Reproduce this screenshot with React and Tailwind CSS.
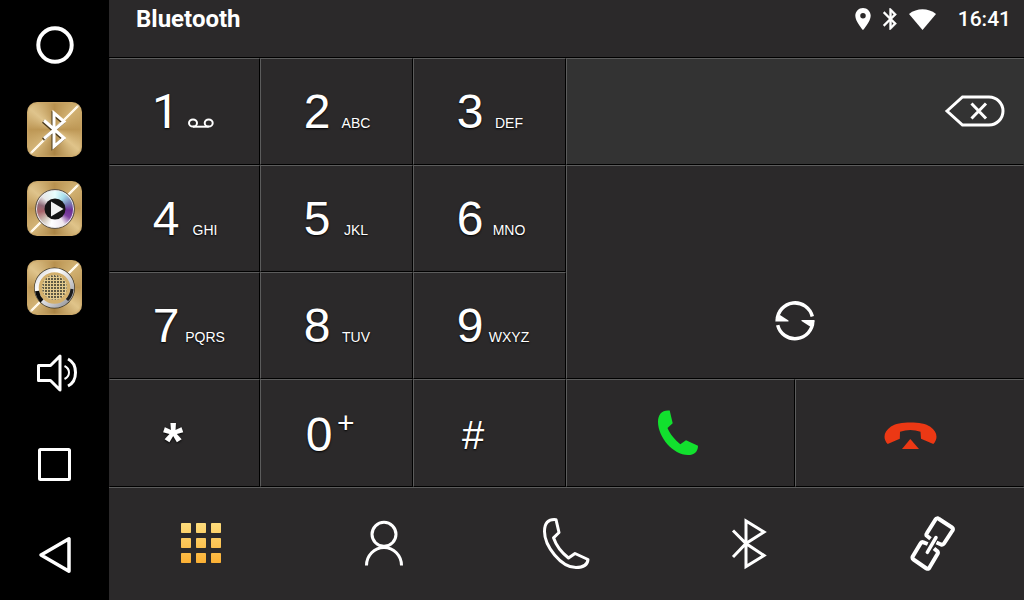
import React from 'react';

const KEYS = [
  { digit: '1', voicemail: true },
  { digit: '2', letters: 'ABC' },
  { digit: '3', letters: 'DEF' },
  { digit: '4', letters: 'GHI' },
  { digit: '5', letters: 'JKL' },
  { digit: '6', letters: 'MNO' },
  { digit: '7', letters: 'PQRS' },
  { digit: '8', letters: 'TUV' },
  { digit: '9', letters: 'WXYZ' },
];

// Bevelled separators: light on the top/left edge, dark on the bottom/right edge
const CELL = 'border border-t-[#5c5c5c] border-l-[#5c5c5c] border-b-black border-r-black';
const FIRST_CELL = 'border border-t-[#5c5c5c] border-l-transparent border-b-black border-r-black';
const TILE = 'flex h-[55px] w-[55px] items-center justify-center rounded-[10px] bg-[linear-gradient(135deg,transparent_48%,#fff8e8_49%,#fff8e8_51%,transparent_52%),conic-gradient(#b8914f,#d2b273_45deg,#bd9755_90deg,#e0c48a_130deg,#aa8445_180deg,#d4b578_225deg,#bd9755_270deg,#dfc48c_310deg,#b8914f)] shadow-[inset_0_0_2px_1px_#c9a566]';

const VoicemailIcon = () => (
  <svg width="26" height="10" viewBox="0 0 26 10" fill="none" stroke="white" strokeWidth="2" className="mr-2">
    <ellipse cx="5" cy="5" rx="4" ry="3.6" />
    <ellipse cx="20.7" cy="5" rx="4" ry="3.6" />
    <path d="M5 8.7H20.7" />
  </svg>
);

const Key = ({ digit, letters, voicemail, first }) => (
  <button className={`${first ? FIRST_CELL : CELL} flex items-center pl-[42px]`}>
    <span className="flex items-baseline [text-shadow:0_1px_2px_#000]">
      {/* Roboto's 1 has no foot */}
      <span className={`w-7 text-center text-5xl leading-none ${voicemail ? "pr-1 font-['Roboto',sans-serif]" : ''}`}>{digit}</span>
      <span className="flex w-[50px] justify-center text-sm">
        {voicemail ? <VoicemailIcon /> : letters}
      </span>
    </span>
  </button>
);

const Sidebar = () => (
  <aside className="grid w-[109px] shrink-0 grid-rows-[90fr_79fr_79fr_79fr_92fr_91fr_90fr] bg-black">
    <button aria-label="Home" className="flex items-center justify-center">
      <svg width="38" height="38" viewBox="0 0 38 38" fill="none" stroke="white" strokeWidth="4">
        <circle cx="19" cy="19" r="16.7" />
      </svg>
    </button>
    <button aria-label="Bluetooth" className="flex items-center justify-center">
      <span className={TILE}>
        <svg width="55" height="55" viewBox="0 0 55 55" fill="none">
          <path d="M17 18.500L37 36L27 44.500V11L37 19.500L17 36.500" stroke="#4b3a1c" strokeWidth="3" transform="translate(-1 1)" />
          <path d="M17 18.500L37 36L27 44.500V11L37 19.500L17 36.500" stroke="white" strokeWidth="3" />
        </svg>
      </span>
    </button>
    <button aria-label="Music" className="flex items-center justify-center">
      <span className={TILE}>
        <span className="flex h-10 w-10 items-center justify-center rounded-full border border-[#5d5346] bg-[conic-gradient(#e8ffff,#a8e0ee_35deg,#7a86b8_65deg,#6d2f94_95deg,#7d3fa0_120deg,#f0e8f0_150deg,#ffffff_195deg,#cfc4b8_225deg,#a8636a_260deg,#8f6a78_285deg,#e8e8e8_315deg,#e8ffff)] shadow-[inset_0_0_0_1px_#e9e9ee]">
          <svg width="22" height="22" viewBox="0 0 22 22">
            <circle cx="11" cy="11" r="10.500" fill="#141414" />
            <path d="M7 3.500L19.500 11L7 18.500Z" fill="#f2f2f2" />
          </svg>
        </span>
      </span>
    </button>
    <button aria-label="Radio" className="flex items-center justify-center">
      <span className={TILE}>
        <svg width="55" height="55" viewBox="0 0 55 55">
          <defs>
            <pattern id="mesh" width="3" height="3" patternUnits="userSpaceOnUse">
              <rect width="3" height="3" fill="#e3ca8e" />
              <rect width="2" height="2" fill="#5f5a44" />
            </pattern>
            <linearGradient id="chrome" x1="0" y1="0" x2="1" y2="1">
              <stop offset="0" stopColor="#d4d4d8" />
              <stop offset=".3" stopColor="#ffffff" />
              <stop offset=".7" stopColor="#c4c4c8" />
              <stop offset="1" stopColor="#8a8a8e" />
            </linearGradient>
          </defs>
          <circle cx="27.500" cy="28" r="20.500" fill="#3c3627" />
          <circle cx="27.500" cy="28" r="17.800" fill="#d3b06d" stroke="url(#chrome)" strokeWidth="4" />
          <path d="M10 31A18 18 0 0 0 15 41" fill="none" stroke="#0c0c0c" strokeWidth="4" />
          <path d="M45 29A18 18 0 0 1 40 40" fill="none" stroke="#1c1c1c" strokeWidth="3" />
          <circle cx="27.500" cy="27.500" r="12.500" fill="url(#mesh)" />
          <circle cx="27.500" cy="27.500" r="12" fill="none" stroke="#f0e2bc" strokeDasharray="1 2" />
        </svg>
      </span>
    </button>
    <button aria-label="Volume" className="flex items-center justify-center">
      <svg width="42" height="40" viewBox="0 0 42 40" fill="none" stroke="white" strokeWidth="3" strokeLinejoin="round" className="ml-1">
        <path d="M2.500 12.500H14.500L24 3V37L14.500 27.500H2.500Z" />
        <path d="M28.500 13C34.500 16 34.500 23 28.500 26" strokeWidth="2" />
        <path d="M32 6C42 11 42 28 32 33" />
      </svg>
    </button>
    <button aria-label="Recent apps" className="flex items-center justify-center">
      <svg width="33" height="33" viewBox="0 0 33 33" fill="none" stroke="white" strokeWidth="3">
        <rect x="1.500" y="1.500" width="30" height="30" rx="1" />
      </svg>
    </button>
    <button aria-label="Back" className="flex items-center justify-center">
      <svg width="34" height="38" viewBox="0 0 34 38" fill="none" stroke="white" strokeWidth="3.500" strokeLinejoin="round">
        <path d="M3 19L31 2.800V35.200Z" />
      </svg>
    </button>
  </aside>
);

const Header = () => (
  <header className="h-[58px] border-b border-black pr-[13px] pl-[27px] font-['Roboto',sans-serif]">
    <div className="flex h-[38px] items-center justify-between">
      <h1 className="text-2xl leading-none font-bold">Bluetooth</h1>
      <div className="flex items-center gap-3">
        <svg width="16" height="22" viewBox="5 2 14 20" fill="white">
          <path d="M12 2C8.130 2 5 5.130 5 9c0 5.250 7 13 7 13s7-7.750 7-13c0-3.870-3.130-7-7-7zm0 9.500a2.500 2.500 0 1 1 0-5 2.500 2.500 0 0 1 0 5z" />
        </svg>
        <svg width="14" height="22" viewBox="5 2 13 20" fill="white" stroke="white" strokeWidth=".3">
          <path d="M17.710 7.710L12 2h-1v7.590L6.410 5 5 6.410 10.590 12 5 17.590 6.410 19 11 14.410V22h1l5.710-5.710-4.300-4.290 4.300-4.290zM13 5.830l1.880 1.880L13 9.590V5.830zm1.880 10.460L13 18.170v-3.760l1.880 1.880z" />
        </svg>
        <svg width="27" height="21" viewBox="0 0 27 21" fill="white">
          <path d="M0 5C8-1.200 19-1.200 27 5L13.500 21Z" />
        </svg>
        <time className="pl-[10px] text-[21px] leading-none font-medium">16:41</time>
      </div>
    </div>
  </header>
);

const Keypad = () => (
  <main className="grid flex-1 grid-cols-[151fr_153fr_153fr_229fr_229fr] grid-rows-[107fr_107fr_107fr_108fr]">
    <div className="col-span-3 row-span-3 grid grid-cols-subgrid grid-rows-subgrid">
      {KEYS.map((key, i) => (
        <Key key={key.digit} {...key} first={i % 3 === 0} />
      ))}
    </div>

    <div className={`${CELL} col-span-2 flex items-center border-r-transparent bg-[#333333] pr-[18px] pb-[2px]`}>
      <input aria-label="Phone number" className="h-full min-w-0 flex-1 bg-transparent px-6 text-4xl text-white outline-none" />
      <button aria-label="Delete digit">
        <svg width="61" height="34" viewBox="0 0 61 34" fill="none" stroke="white" strokeWidth="3">
          <path d="M3 17L18.500 3H45A14 14 0 0 1 45 31H18.500Z" />
          <path d="M27.500 9.500L42 24.500M42 9.500L27.500 24.500" />
        </svg>
      </button>
    </div>

    <div className={`${CELL} col-span-2 row-span-2 flex items-end justify-center border-r-transparent pb-[37px]`}>
      <button aria-label="Sync contacts">
        <svg width="40" height="40" viewBox="0 0 40 40" fill="none" stroke="white" strokeWidth="3.500">
          <path d="M2.200 19.500A17.800 17.800 0 0 1 37.300 15.500" />
          <path d="M.3 20.500H13.500V19.500L5 14L2 15Z" fill="white" stroke="none" />
          <g transform="rotate(180 20 19.800)">
            <path d="M2.200 19.500A17.800 17.800 0 0 1 37.300 15.500" />
            <path d="M.3 20.500H13.500V19.500L5 14L2 15Z" fill="white" stroke="none" />
          </g>
        </svg>
      </button>
    </div>

    <button className={`${FIRST_CELL} flex items-center pt-4 pl-[53px]`}>
      <span className="text-[52px] leading-none font-bold [text-shadow:0_1px_2px_#000]">*</span>
    </button>
    <button className={`${CELL} flex items-center pt-1 pl-11`}>
      <span className="flex items-start [text-shadow:0_1px_2px_#000]">
        <span className="w-7 text-center text-5xl leading-none">0</span>
        <span className="pl-1 text-3xl leading-6">+</span>
      </span>
    </button>
    <button className={`${CELL} flex items-center pt-1 pl-12`}>
      <span className="text-[40px] leading-none [text-shadow:0_1px_2px_#000]">#</span>
    </button>
    <button aria-label="Call" className={`${CELL} flex items-center justify-center pr-[6px] pb-[2px]`}>
      <svg width="40" height="45" viewBox="0 0 40 45" fill="#12e02e">
        <path d="M11.700 .5L14.700 13.300L9.500 18C12 24 17 30 22.300 34.200L28 30.300L40 35.700C40 42 36 45 30 45C15 45 0 27 0 12C0 4 4-.2 11.700 .5Z" />
      </svg>
    </button>
    <button aria-label="Hang up" className={`${CELL} flex items-center justify-center border-r-transparent pt-1 pl-[2px]`}>
      <svg width="53" height="27" viewBox="0 0 53 27" fill="#ec3814">
        <path d="M3.700 22C-1 17-1 10 7 4.500C14-1 39-1 46 4.500C54 10 54 17 49.300 22L37 16.700L36.500 9.700Q26.500 6.500 16 9.700L15.800 16.700Z" />
        <path d="M26.300 17L18 27H35Z" />
      </svg>
    </button>
  </main>
);

const BottomNav = () => (
  <nav className="grid h-[113px] grid-cols-5 border-t border-[#5c5c5c] pb-[2px]">
    <button aria-label="Keypad" className="flex items-center justify-center">
      <svg width="40" height="40" viewBox="0 0 40 40">
        <defs>
          <linearGradient id="gold" gradientUnits="userSpaceOnUse" x1="0" y1="0" x2="0" y2="40">
            <stop offset="0" stopColor="#fddc7c" />
            <stop offset="1" stopColor="#fbb034" />
          </linearGradient>
        </defs>
        <g fill="url(#gold)">
          {[0, 15, 30].map((y) =>
            [0, 15, 30].map((x) => <rect key={`${x}-${y}`} x={x} y={y} width="10" height="10" rx=".8" />)
          )}
        </g>
      </svg>
    </button>
    <button aria-label="Contacts" className="flex items-center justify-center">
      <svg width="40" height="47" viewBox="0 0 40 47" fill="none" stroke="white" strokeWidth="3">
        <circle cx="20" cy="14.300" r="12" />
        <path d="M2.500 45.500A17.500 18 0 0 1 37.500 45.500" />
      </svg>
    </button>
    <button aria-label="Call history" className="flex items-center justify-center">
      <svg width="47" height="52" viewBox="0 0 47 52" fill="none" stroke="white" strokeWidth="3" strokeLinejoin="round">
        <path d="M13 2.700L16 15.500L10.500 20.800C13 28 19 36 25.500 41L32 36.500L45 42.500C44.500 48 40 50.500 33 50.500C18 50.500 1.500 29 1.500 14.500C1.500 6 5 2 13 2.700Z" />
      </svg>
    </button>
    <button aria-label="Bluetooth settings" className="flex items-center justify-center">
      <svg width="37" height="53" viewBox="0 0 37 53" fill="none" stroke="white" strokeWidth="3">
        <path d="M2 13.500L15 26.500L33 38.500L15 49.500V4L33 15L15 26.500L2 40" />
      </svg>
    </button>
    <button aria-label="Paired devices" className="flex items-center justify-center">
      <svg width="46" height="57" viewBox="0 0 46 57" fill="none" stroke="white" strokeWidth="4" strokeLinejoin="round">
        <path d="M20.500 23.700L16.500 20.500Q16 19.500 17 18L25.500 4.500Q27 2.500 29 4L42 12.500Q43.500 13.500 42.500 15.500L34 28.500Q33 30 31 29.500L26.500 27.500" />
        <path d="M17.700 29L13.500 27.300Q11.500 26.500 10.500 28.500L2.700 41.500Q2 43.500 3.500 44.500L16.500 53.500Q18.500 54.500 19.500 52.500L27.500 39Q28.500 37 27 36L24 33.500" />
        <path d="M26 22.500L17.300 37.300" strokeWidth="3.500" strokeLinecap="round" />
      </svg>
    </button>
  </nav>
);

export default function App() {
  return (
    <div className="flex min-h-screen bg-[#2b292a] font-['Liberation_Sans',Arial,sans-serif] text-white">
      <Sidebar />
      <div className="flex min-w-0 flex-1 flex-col">
        <Header />
        <Keypad />
        <BottomNav />
      </div>
    </div>
  );
}
